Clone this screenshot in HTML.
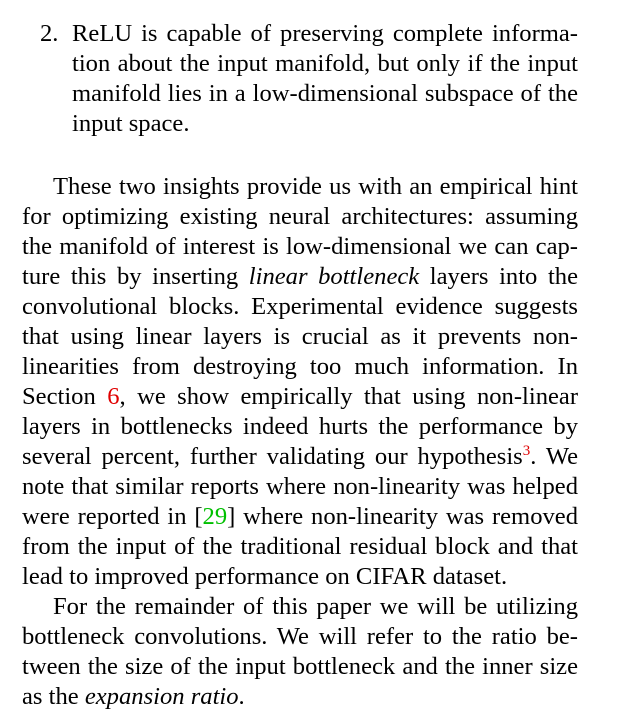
<!DOCTYPE html>
<html><head><meta charset="utf-8"><style>
body{margin:0;width:625px;height:728px;background:#fff;overflow:hidden;font-family:"Liberation Serif","Times New Roman","DejaVu Serif",serif;font-size:24.6px;color:#000}
.l{position:absolute;height:30px;line-height:30px;white-space:nowrap;text-align:justify;text-align-last:justify}
.n{text-align-last:left}
.a{left:72px;width:506px}
.b{left:22px;width:556px}
.r{color:#e00000}.g{color:#00c000}
sup{font-size:15px;line-height:0;vertical-align:9px}
</style></head><body>
<div class="l n" style="left:40px;top:19px">2.</div>
<div class="l a" style="top:19px">ReLU is capable of preserving complete informa-</div>
<div class="l a" style="top:49px">tion about the input manifold, but only if the input</div>
<div class="l a" style="top:79px">manifold lies in a low-dimensional subspace of the</div>
<div class="l a n" style="top:109px">input space.</div>

<div class="l" style="left:53px;width:525px;top:172px">These two insights provide us with an empirical hint</div>
<div class="l b" style="top:202px">for optimizing existing neural architectures: assuming</div>
<div class="l b" style="top:232px">the manifold of interest is low-dimensional we can cap-</div>
<div class="l b" style="top:262px">ture this by inserting <i>linear bottleneck</i> layers into the</div>
<div class="l b" style="top:292px">convolutional blocks. Experimental evidence suggests</div>
<div class="l b" style="top:322px">that using linear layers is crucial as it prevents non-</div>
<div class="l b" style="top:352px">linearities from destroying too much information. In</div>
<div class="l b" style="top:382px">Section <span class="r">6</span>, we show empirically that using non-linear</div>
<div class="l b" style="top:412px">layers in bottlenecks indeed hurts the performance by</div>
<div class="l b" style="top:442px">several percent, further validating our hypothesis<sup class="r">3</sup>. We</div>
<div class="l b" style="top:472px">note that similar reports where non-linearity was helped</div>
<div class="l b" style="top:502px">were reported in [<span class="g">29</span>] where non-linearity was removed</div>
<div class="l b" style="top:532px">from the input of the traditional residual block and that</div>
<div class="l b n" style="top:562px">lead to improved performance on CIFAR dataset.</div>
<div class="l" style="left:53px;width:525px;top:592px">For the remainder of this paper we will be utilizing</div>
<div class="l b" style="top:622px">bottleneck convolutions. We will refer to the ratio be-</div>
<div class="l b" style="top:652px">tween the size of the input bottleneck and the inner size</div>
<div class="l b n" style="top:682px">as the <i>expansion ratio</i>.</div>
</body></html>
